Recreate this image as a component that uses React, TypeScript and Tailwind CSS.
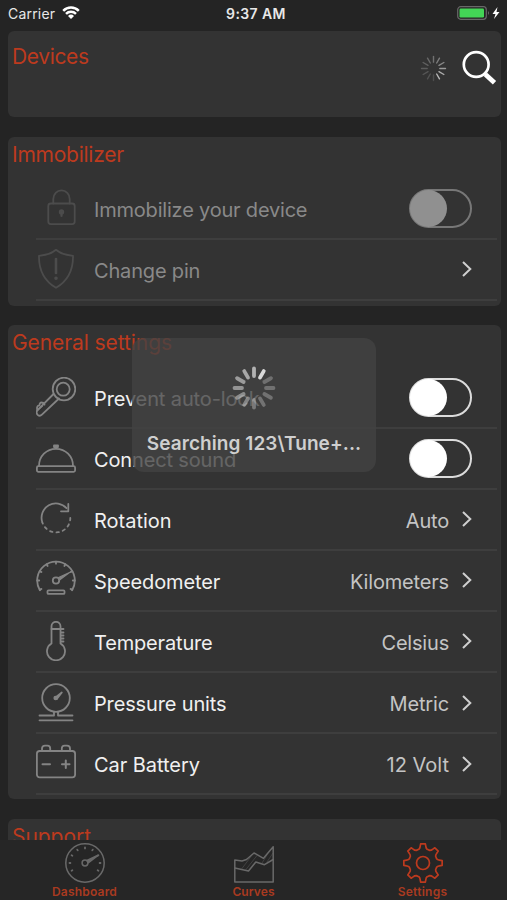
import React from 'react';
import clsx from 'clsx';

type IconProps = { className?: string };

const Stroke = ({ children, className, width = 1.8 }: { children: React.ReactNode; className?: string; width?: number }) => (
  <svg
    viewBox="0 0 40 40"
    className={clsx('size-10 shrink-0', className)}
    fill="none"
    stroke="currentColor"
    strokeWidth={width}
    strokeLinecap="round"
    strokeLinejoin="round"
  >
    {children}
  </svg>
);

const polar = (cx: number, cy: number, r: number, deg: number) => {
  const a = (deg * Math.PI) / 180;
  return `${(cx + r * Math.sin(a)).toFixed(2)} ${(cy - r * Math.cos(a)).toFixed(2)}`;
};

const LockIcon = ({ className }: IconProps) => (
  <Stroke className={className}>
    <rect x="12.3" y="15.5" width="26.4" height="20.6" rx="2.5" />
    <path d="M17.3 15.500v-4.500a8.2 8.7 0 0 1 16.4 0v4.500" />
    <circle cx="25.5" cy="24" r="1.8" fill="currentColor" />
    <path d="M25.5 24v4" strokeWidth="2.200" />
  </Stroke>
);

const ShieldIcon = ({ className }: IconProps) => (
  <Stroke className={className}>
    <path d="M20 .8c4 3.500 10.500 5.500 17 6 .3 14-4.500 24.500-17 32C7.500 31.300 2.700 20.800 3 6.800 9.500 6.300 16 4.300 20 .8Z" />
    <path d="M20 10v14" strokeWidth="2.600" />
    <circle cx="20" cy="29.200" r=".9" fill="currentColor" />
  </Stroke>
);

const KeyIcon = ({ className }: IconProps) => (
  <Stroke className={className}>
    <circle cx="28" cy="12" r="11.3" />
    <circle cx="27.200" cy="12.200" r="6.500" />
    <path d="M17.500 17 1.500 33.200c-1.300 1.400-.9 3.400.2 4.600 1.200 1.100 2.900 1.100 4.200-.1L23 21.500" />
    <path d="M1.500 33.500c-1-2.500-.3-4.500 1-4.800l1-.4c0-2.200 1-2.900 2.200-2.800 1.500 0 2.500 1 2.800 2.200" />
    <path d="m2.500 32.500 4-3.500" strokeWidth="1.200" />
  </Stroke>
);

const BellIcon = ({ className }: IconProps) => (
  <Stroke className={className}>
    <rect x=".9" y="28.200" width="38.200" height="5.600" rx="1.500" />
    <path d="M3 28C3 18 10.500 10.800 20 10.800S37 18 37 28" />
    <path d="M18 7.500h4v1.600h-4z" strokeWidth="1.800" />
  </Stroke>
);

const RotateIcon = ({ className }: IconProps) => (
  <Stroke className={className}>
    <path d="M6.200 23A14.300 14.300 0 0 1 30.500 9.200" />
    <path d="M32.300 5v7.300H25" />
    <path d="M34.300 19A14.300 14.300 0 0 1 6.400 23.500" strokeDasharray="2.500 4" />
  </Stroke>
);

const SpeedometerIcon = ({ className }: IconProps) => (
  <Stroke className={className}>
    <path d={`M${polar(20, 20.5, 18.8, -121)}A18.8 18.8 0 1 1 ${polar(20, 20.5, 18.8, 121)}`} />
    {[-120, -90, -60, -30, 0, 30, 60, 90, 120].map((d) => (
      <path key={d} d={`M${polar(20, 20.5, 18.8, d)}L${polar(20, 20.5, 16.8, d)}`} />
    ))}
    <circle cx="20" cy="20.5" r="3.200" />
    <path d="m22.500 17.500 11-5-9.300 7Z" fill="currentColor" strokeWidth="1.200" />
    <rect x="11.500" y="30.300" width="17" height="3.600" rx="1" />
  </Stroke>
);

const ThermometerIcon = ({ className }: IconProps) => (
  <Stroke className={className}>
    <path d="M15.500 22.500V5.300a4.500 4.500 0 0 1 9 0v17.200a9 9 0 1 1-9 0Z" />
    <path d="M15.500 8h12M25 11.500h2.500M25 14.500h2.500M25 17.500h2.500M25 20.500h2.500" />
  </Stroke>
);

const PressureIcon = ({ className }: IconProps) => (
  <Stroke className={className}>
    <circle cx="20" cy="15" r="13.800" />
    <circle cx="19.700" cy="15" r="1.400" fill="currentColor" />
    <path d="m19.500 14.500 6.300-5-5 6.500Z" fill="currentColor" />
    <path d="M18 29v3.500H3.500M22 29v3.500h14.500M3.500 37.300h33" />
  </Stroke>
);

const BatteryIcon = ({ className }: IconProps) => (
  <Stroke className={className}>
    <rect x=".9" y="7" width="38.200" height="26.400" rx="2.800" />
    <path d="M6 6.500V4.500Q6 1.700 9 1.700h2.500q2.700 0 2.700 2.800v2M25.800 6.500V4.500q0-2.800 2.700-2.800H31q3 0 3 2.800v2" />
    <path d="M6.500 20.300h7.500M26 20.300h7.500M29.800 16.500v7.600" strokeWidth="2" />
  </Stroke>
);

const DashboardIcon = ({ className }: IconProps) => (
  <Stroke className={className} width={1.5}>
    <circle cx="20" cy="20" r="19.200" />
    {[-120, -90, -60, -30, 0, 30, 60, 90, 120].map((d) => (
      <path key={d} d={`M${polar(20, 20, 15.5, d)}L${polar(20, 20, 14.6, d)}`} strokeWidth="1.800" />
    ))}
    <circle cx="20" cy="20" r="2.900" />
    <path d="m22 17.500 11-5.200-9.800 7.500Z" fill="currentColor" />
  </Stroke>
);

const CurvesIcon = ({ className }: IconProps) => (
  <Stroke className={className} width={1.5}>
    <path d="M.8 17v22h38.400V3.800L29.500 15.300 20 10l-7.500 6.500L8 18Z" />
    <path d="m.8 25 13.700 3 7.300-9 8.700 2.700 8.700-5.200" />
    <path d="m8 25.500 9-12M12 26.500l11-14M28 20l5-8M33 19l6-9" strokeWidth=".4" />
  </Stroke>
);

const teeth = [0, 45, 90, 135, 180, 225, 270, 315];

const gearPath =
  teeth
    .map((a, i) =>
      [
        `${i ? 'L' : 'M'}${polar(20, 20, 14.3, a - 17)}`,
        `Q${polar(20, 20, 15.3, a - 11)} ${polar(20, 20, 16.6, a - 10)}`,
        `L${polar(20, 20, 19.3, a - 7)}`,
        `L${polar(20, 20, 19.3, a + 7)}`,
        `L${polar(20, 20, 16.6, a + 10)}`,
        `Q${polar(20, 20, 15.3, a + 11)} ${polar(20, 20, 14.3, a + 17)}`,
      ].join('')
    )
    .join('') + 'Z';

const GearIcon = ({ className }: IconProps) => (
  <Stroke className={className} width={1.7}>
    <path d={gearPath} />
    <circle cx="20" cy="20" r="6.500" />
  </Stroke>
);

const Spinner = ({ className, inner, outer, width, opacities }: { className?: string; inner: number; outer: number; width: number; opacities: number[] }) => (
  <svg viewBox="-22 -22 44 44" className={className} stroke="white" strokeWidth={width} strokeLinecap="round">
    {opacities.map((o, i) => (
      <line key={i} x1="0" x2="0" y1={-inner} y2={-outer} opacity={o} transform={`rotate(${(i * 360) / opacities.length})`} />
    ))}
  </svg>
);

const Chevron = () => (
  <svg viewBox="0 0 10 16" className="ml-[13px] h-4 w-2.5 shrink-0" fill="none" stroke="#cfcfcf" strokeWidth="2">
    <path d="m1 1 7.300 7L1 15" />
  </svg>
);

const Toggle = ({ disabled }: { disabled?: boolean }) => (
  <div className={clsx('h-[39px] w-[63px] rounded-full border-2', disabled ? 'border-[#777]' : 'border-[#dcdcdc]')}>
    <div className={clsx('-mt-px -ml-px size-[37px] rounded-full', disabled ? 'bg-[#909090]' : 'bg-white')} />
  </div>
);

type RowProps = {
  icon: React.ComponentType<IconProps>;
  label: string;
  tracking?: string;
  value?: string;
  valueTracking?: string;
  toggle?: boolean;
  disabled?: boolean;
};

const Row = ({ icon: Icon, label, tracking, value, valueTracking, toggle, disabled }: RowProps) => (
  <div className="mr-1 ml-7 flex h-[61.1px] items-center border-b-2 border-[#3e3e3e] pr-[25px]">
    <Icon className={disabled ? 'text-[#4c4c4c]' : 'text-[#848484]'} />
    <span className={clsx('ml-[18px] flex-1 pt-[3px] whitespace-nowrap', tracking, disabled ? 'text-[#898989]' : 'text-[#f0f0f0]')}>{label}</span>
    {toggle ? (
      <Toggle disabled={disabled} />
    ) : (
      <>
        {value && <span className={clsx('pt-[3px] whitespace-nowrap text-[#c4c4c4]', valueTracking)}>{value}</span>}
        <Chevron />
      </>
    )}
  </div>
);

const SectionTitle = ({ children, className }: { children: string; className: string }) => (
  <h2 className={clsx('ml-1 text-[21px] leading-[26px] whitespace-nowrap text-[#bd3a1e]', className)}>{children}</h2>
);

const StatusBar = () => (
  <header className="grid h-[31px] grid-cols-3 items-center px-2 pb-1 text-[14px] text-[#e8e8e8]">
    <div className="flex items-center gap-[7px]">
      <span className="tracking-[0.2px]">Carrier</span>
      <svg viewBox="0 0 18 13" className="mb-0.5 h-[13px] w-[18px]" fill="none" stroke="white" strokeWidth="2.500">
        <path d="M1.200 4.800a11 11 0 0 1 15.600 0M4 7.900a7.100 7.100 0 0 1 10 0" />
        <path d="m9 13-3-3a4.300 4.300 0 0 1 6 0Z" fill="white" stroke="none" />
      </svg>
    </div>
    <span className="ml-[5px] text-center font-semibold tracking-[0.4px] whitespace-nowrap">9:37 AM</span>
    <div className="-mr-0.5 mb-px flex items-center justify-end">
      <svg viewBox="0 0 44 14" className="h-3.5 w-11">
        <rect x=".7" y=".7" width="28.600" height="12.600" rx="3" fill="none" stroke="#686868" strokeWidth="1.200" />
        <rect x="2.500" y="2.500" width="24.500" height="9" rx="1.200" fill="#43d556" />
        <path d="M31 5q2 2 0 4Z" fill="#686868" />
        <path d="m40.500 1-5 7h3l-1.500 5 5.500-7h-3Z" fill="white" />
      </svg>
    </div>
  </header>
);

const tabs = [
  { label: 'Dashboard', icon: DashboardIcon, color: 'text-[#696969]', tracking: 'tracking-[0.2px]' },
  { label: 'Curves', icon: CurvesIcon, color: 'text-[#696969]', tracking: 'tracking-[0.1px]' },
  { label: 'Settings', icon: GearIcon, color: 'text-[#bd3a1e]', tracking: 'tracking-[0.25px]' },
];

export default function App() {
  return (
    <div className="relative flex h-[900px] w-[507px] flex-col overflow-hidden bg-[#242424] font-['Inter',sans-serif] text-[20px]">
      <StatusBar />
      <main className="min-h-0 flex-1 overflow-hidden pr-[6px] pl-2">
        <section className="flex h-[86px] rounded-md bg-[#333] pt-[13px]">
          <SectionTitle className="tracking-[-0.35px]">Devices</SectionTitle>
          <div className="mr-1 ml-auto flex h-12 items-center">
            <Spinner
              className="mr-3 size-[31px]"
              inner={9}
              outer={17}
              width={2}
              opacities={[0.3, 0.36, 0.42, 0.5, 0.6, 0.65, 0.13, 0.15, 0.17, 0.2, 0.22, 0.26]}
            />
            <svg viewBox="0 0 36 36" className="size-9" fill="none" stroke="white">
              <circle cx="15.200" cy="14.500" r="12.400" strokeWidth="2.700" />
              <path d="m23.500 23.500 1.500 1.500" strokeWidth="3" />
              <path d="m24.500 24.500 9 8.300" strokeWidth="4.800" />
            </svg>
          </div>
        </section>

        <section className="mt-[19.500px] h-[169px] rounded-md bg-[#333] pt-[5px]">
          <SectionTitle className="tracking-[-0.25px]">Immobilizer</SectionTitle>
          <div className="mt-[11px]">
            <Row icon={LockIcon} label="Immobilize your device" tracking="tracking-[-0.2px]" toggle disabled />
            <Row icon={ShieldIcon} label="Change pin" tracking="tracking-[-0.17px]" disabled />
          </div>
        </section>

        <section className="mt-[19.500px] h-[474px] rounded-md bg-[#333] pt-[5px]">
          <SectionTitle className="tracking-[-0.08px]">General settings</SectionTitle>
          <div className="mt-[11.500px]">
            <Row icon={KeyIcon} label="Prevent auto-lock" tracking="tracking-[-0.12px]" toggle />
            <Row icon={BellIcon} label="Connect sound" tracking="tracking-[-0.15px]" toggle />
            <Row icon={RotateIcon} label="Rotation" value="Auto" valueTracking="tracking-[-0.2px]" />
            <Row icon={SpeedometerIcon} label="Speedometer" tracking="tracking-[-0.1px]" value="Kilometers" valueTracking="tracking-[-0.17px]" />
            <Row icon={ThermometerIcon} label="Temperature" tracking="tracking-[-0.17px]" value="Celsius" valueTracking="tracking-[-0.2px]" />
            <Row icon={PressureIcon} label="Pressure units" tracking="tracking-[-0.15px]" value="Metric" valueTracking="tracking-[-0.15px]" />
            <Row icon={BatteryIcon} label="Car Battery" tracking="tracking-[-0.05px]" value="12 Volt" />
          </div>
        </section>

        <section className="mt-5 h-[100px] rounded-md bg-[#333] pt-[5px]">
          <SectionTitle className="tracking-[-0.05px]">Support</SectionTitle>
        </section>
      </main>

      <nav className="grid h-[60px] shrink-0 grid-cols-3 bg-[#262626]">
        {tabs.map(({ label, icon: Icon, color, tracking }) => (
          <div key={label} className="flex flex-col items-center pt-[3px]">
            <Icon className={color} />
            <span className={clsx('mt-px text-[12px] leading-[15px] font-semibold text-[#a93a20]', tracking)}>{label}</span>
          </div>
        ))}
      </nav>

      {/* progress overlay */}
      <div className="absolute top-[338px] left-[132px] flex h-[134px] w-[244px] flex-col items-center rounded-xl bg-[#424242]/80 pt-[28px]">
        <Spinner
          className="size-11"
          inner={12}
          outer={19.500}
          width={3.800}
          opacities={[0.6, 0.8, 0.25, 0.26, 0.26, 0.27, 0.3, 0.36, 0.4, 0.44, 0.48, 0.54]}
        />
        <p className="mt-[22px] text-[19px] leading-6 font-semibold tracking-[0.07px] whitespace-nowrap text-[#cfcfcf]">Searching 123\Tune+...</p>
      </div>
    </div>
  );
}
